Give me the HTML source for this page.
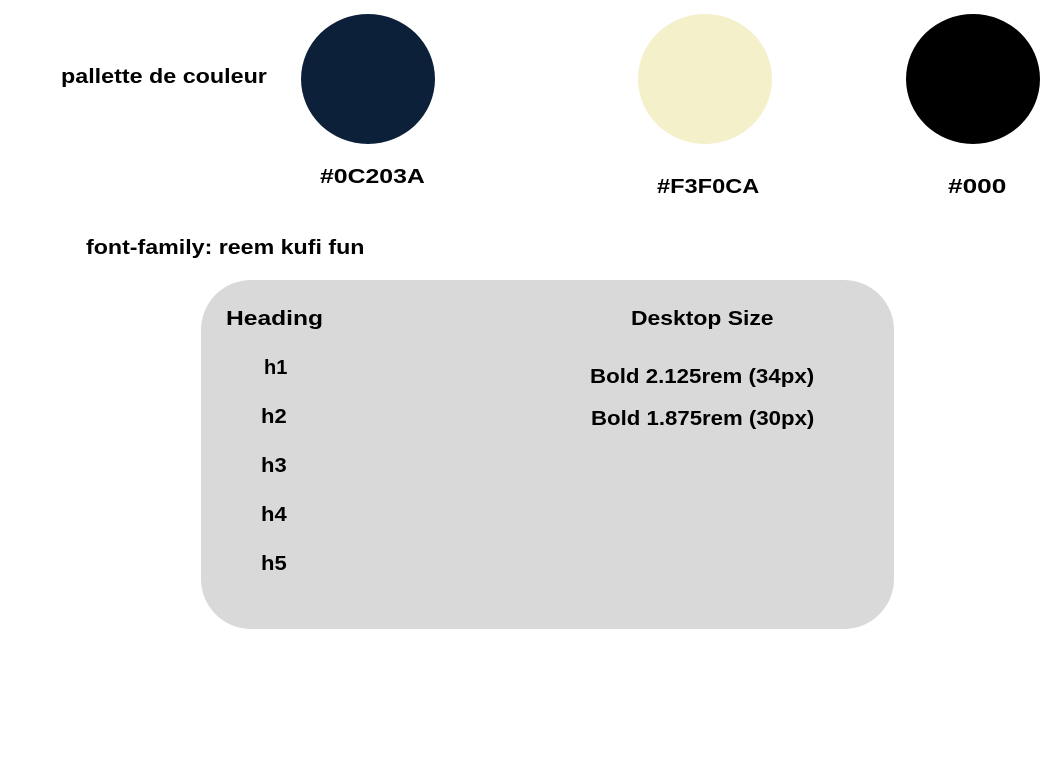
<!DOCTYPE html>
<html><head><style>
body{margin:0;width:1062px;height:759px;background:#fff;position:relative;font-family:"Liberation Sans",sans-serif;font-weight:bold;color:#000;overflow:hidden}
.t{position:absolute;font-size:20px;white-space:nowrap;transform-origin:left center}
.c{position:absolute;border-radius:50%}
.box{position:absolute;left:201px;top:280px;width:693px;height:349px;background:#d9d9d9;border-radius:50px}
</style></head><body>
<div class="t" style="left:61px;top:66px;transform:scaleX(1.165)">pallette de couleur</div>
<div class="c" style="left:301px;top:14px;width:134px;height:130px;background:#0c203a"></div>
<div class="c" style="left:638px;top:14px;width:134px;height:130px;background:#f3f0ca"></div>
<div class="c" style="left:906px;top:14px;width:134px;height:130px;background:#000"></div>
<div class="t" style="left:320px;top:166px;transform:scaleX(1.24)">#0C203A</div>
<div class="t" style="left:657px;top:176px;transform:scaleX(1.18)">#F3F0CA</div>
<div class="t" style="left:948px;top:176px;transform:scaleX(1.31)">#000</div>
<div class="t" style="left:86px;top:237px;transform:scaleX(1.16)">font-family: reem kufi fun</div>
<div class="box"></div>
<div class="t" style="left:226px;top:308px;transform:scaleX(1.23)">Heading</div>
<div class="t" style="left:631px;top:308px;transform:scaleX(1.145)">Desktop Size</div>
<div class="t" style="left:264px;top:357px">h1</div>
<div class="t" style="left:261px;top:406px;transform:scaleX(1.1)">h2</div>
<div class="t" style="left:261px;top:455px;transform:scaleX(1.1)">h3</div>
<div class="t" style="left:261px;top:504px;transform:scaleX(1.1)">h4</div>
<div class="t" style="left:261px;top:553px;transform:scaleX(1.1)">h5</div>
<div class="t" style="left:590px;top:366px;transform:scaleX(1.114)">Bold 2.125rem (34px)</div>
<div class="t" style="left:591px;top:408px;transform:scaleX(1.11)">Bold 1.875rem (30px)</div>
</body></html>
